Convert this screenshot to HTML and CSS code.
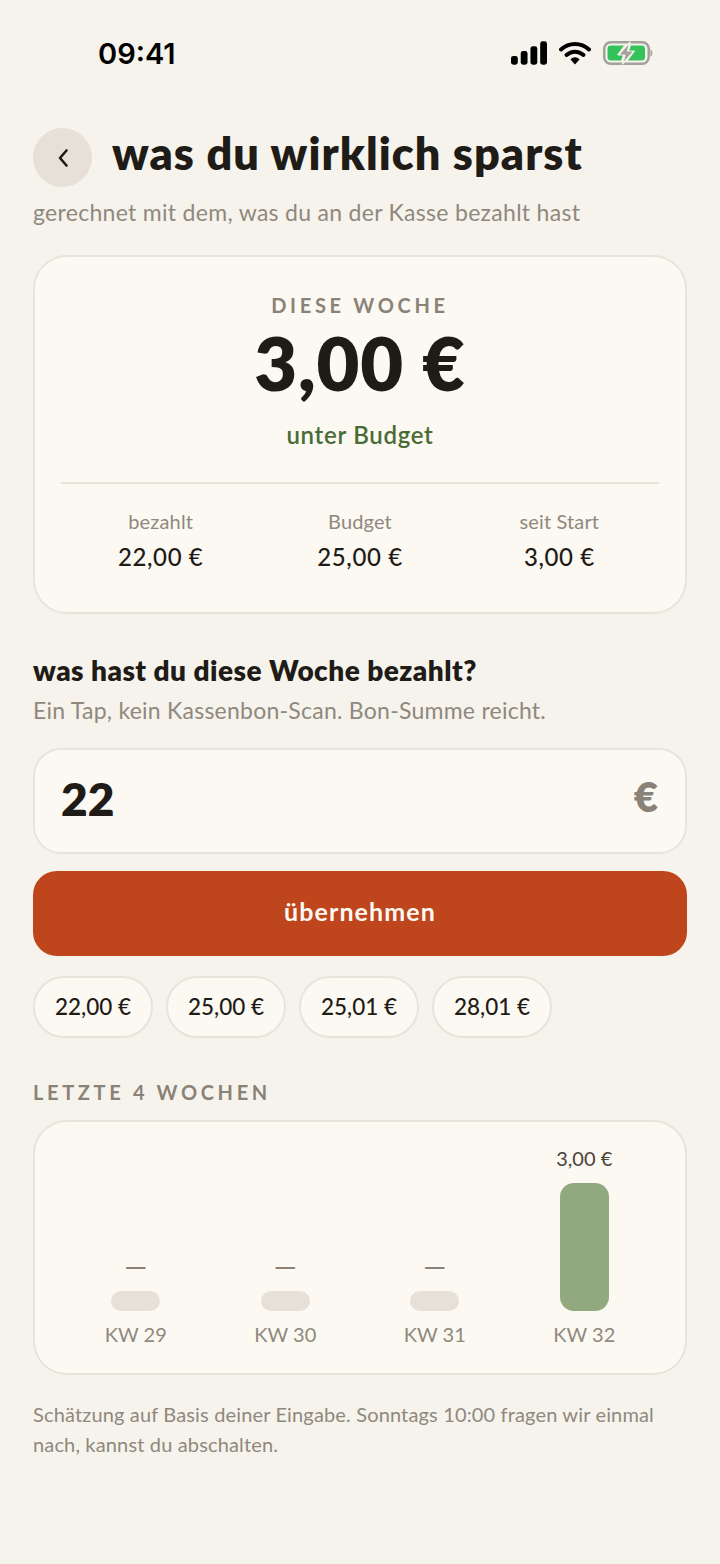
FILE: index.html
```html
<!DOCTYPE html>
<html lang="de">
<head>
<meta charset="utf-8">
<title>was du wirklich sparst</title>
<link rel="stylesheet" href="styles.css">
</head>
<body>
<div class="status">
  <span class="time">09:41</span>
  <div class="status-icons">
    <svg class="sig" width="36" height="24" viewBox="0 0 37 24"><rect x="0" y="15" width="7" height="9" rx="2.500"/><rect x="10" y="10" width="7" height="14" rx="2.500"/><rect x="20" y="5" width="7" height="19" rx="2.500"/><rect x="30" y="0" width="7" height="24" rx="2.500"/></svg>
    <svg class="wifi" width="32" height="24" viewBox="0 0 32 24"><path d="M2 8.500C10 1 22 1 30 8.500" fill="none" stroke="#000" stroke-width="4" stroke-linecap="round"/><path d="M7.500 14C12.500 9.500 19.500 9.500 24.500 14" fill="none" stroke="#000" stroke-width="4" stroke-linecap="round"/><path d="M11.500 18.500L16 23.500L20.500 18.500C18 15.500 14 15.500 11.500 18.500Z" fill="#000"/></svg>
    <svg class="batt" width="51" height="24" viewBox="0 0 51 24"><rect x="1.250" y="1.250" width="44.500" height="21.500" rx="6.500" fill="none" stroke="#a2a19a" stroke-width="2.500"/><path d="M8 4.500H21L14 14H20L18 19.500H8C5.500 19.500 4.500 18.500 4.500 16V8C4.500 5.500 5.500 4.500 8 4.500Z" fill="#34c35a"/><path d="M28 4.500H38.500C41 4.500 42 5.500 42 8V16C42 18.500 41 19.500 38.500 19.500H25L32 10H26Z" fill="#34c35a"/><path d="M27 1L15.500 14H22L19.500 23L31 10H24.500Z" fill="#a2a19a" stroke="#f6f3ec" stroke-width="1.200" stroke-linejoin="round"/><path d="M47.500 8.500C50 9.500 50 14.500 47.500 15.500Z" fill="#a2a19a"/></svg>
  </div>
</div>

<main class="page">
  <header class="head">
    <div class="back"><svg width="12" height="20" viewBox="0 0 12 20"><path d="M9.500 2.500L3 10L9.500 17.500" fill="none" stroke="#1f1b16" stroke-width="2.600" stroke-linecap="round" stroke-linejoin="round"/></svg></div>
    <h1>was du wirklich sparst</h1>
  </header>
  <p class="subtitle">gerechnet mit dem, was du an der Kasse bezahlt hast</p>

  <section class="card summary">
    <div class="eyebrow">DIESE WOCHE</div>
    <div class="big">3,00 €</div>
    <div class="under">unter Budget</div>
    <div class="stats">
      <div class="stat"><span class="stat-l">bezahlt</span><span class="stat-v">22,00 €</span></div>
      <div class="stat"><span class="stat-l">Budget</span><span class="stat-v">25,00 €</span></div>
      <div class="stat"><span class="stat-l">seit Start</span><span class="stat-v">3,00 €</span></div>
    </div>
  </section>

  <h2>was hast du diese Woche bezahlt?</h2>
  <p class="hint">Ein Tap, kein Kassenbon-Scan. Bon-Summe reicht.</p>

  <div class="input"><span class="input-v">22</span><span class="input-c">€</span></div>
  <div class="btn">übernehmen</div>

  <div class="chips">
    <span class="chip">22,00 €</span>
    <span class="chip">25,00 €</span>
    <span class="chip">25,01 €</span>
    <span class="chip">28,01 €</span>
  </div>

  <div class="section-label">LETZTE 4 WOCHEN</div>
  <section class="card chart">
    <div class="col"><span class="val dash">—</span><div class="bar empty"></div><span class="kw">KW 29</span></div>
    <div class="col"><span class="val dash">—</span><div class="bar empty"></div><span class="kw">KW 30</span></div>
    <div class="col"><span class="val dash">—</span><div class="bar empty"></div><span class="kw">KW 31</span></div>
    <div class="col"><span class="val dark">3,00 €</span><div class="bar full"></div><span class="kw">KW 32</span></div>
  </section>

  <p class="foot">Schätzung auf Basis deiner Eingabe. Sonntags 10:00 fragen wir einmal nach, kannst du abschalten.</p>
</main>
</body>
</html>
```

FILE: styles.css
```css
* { box-sizing: border-box; margin: 0; padding: 0; }
html, body { background: #f6f3ec; }
body {
  width: 720px;
  height: 1564px;
  overflow: hidden;
  font-family: "Lato", "Noto Sans", sans-serif;
  color: #1f1b16;
}
.status {
  height: 128px;
  padding: 36px 66px 0 98px;
  display: flex;
  justify-content: space-between;
  align-items: flex-start;
}
.time { font-family: "Inter", sans-serif; font-weight: 600; font-size: 29px; line-height: 36px; color: #000; }
.status-icons { display: flex; align-items: center; gap: 12px; padding-top: 5px; }
.status-icons svg { display: block; }
.page { padding: 0 33px; }
.head { display: flex; align-items: center; gap: 20px; height: 59px; }
.back {
  width: 59px; height: 59px; border-radius: 50%;
  background: #e6e0d6;
  display: flex; align-items: center; justify-content: center;
}
h1 { font-size: 45px; font-weight: 800; line-height: 59px; padding-bottom: 9px; letter-spacing: 1.05px; color: #1f1b16; white-space: nowrap; }
.subtitle { margin-top: 10px; font-size: 23px; line-height: 30px; color: #8f887d; letter-spacing: 0.3px; }
.card { background: #fcf9f3; border: 2px solid #e9e4da; border-radius: 34px; }
.summary { margin-top: 28px; height: 359px; padding: 36px 26px 0; text-align: center; }
.eyebrow { font-size: 20px; font-weight: 700; line-height: 24px; letter-spacing: 3.7px; color: #8a8277; }
.big { margin-top: 3px; font-size: 74px; font-weight: 800; line-height: 86px; letter-spacing: 0.8px; }
.under { margin-top: 14px; font-size: 24px; font-weight: 600; line-height: 30px; letter-spacing: 0.7px; color: #4a6b35; }
.stats { margin-top: 32px; border-top: 2px solid #e9e4da; padding-top: 24px; display: grid; grid-template-columns: repeat(3, 1fr); }
.stat { display: flex; flex-direction: column; align-items: center; gap: 8px; }
.stat-l { font-size: 20px; line-height: 26px; letter-spacing: 0.15px; color: #8f887d; }
.stat-v { font-size: 24px; line-height: 30px; font-weight: 500; letter-spacing: 0.6px; }
h2 { margin-top: 40px; font-size: 28px; font-weight: 800; line-height: 32px; letter-spacing: 0.47px; }
.hint { margin-top: 10px; font-size: 23px; line-height: 28px; color: #8f887d; letter-spacing: 0.25px; }
.input {
  margin-top: 24px; height: 106px;
  background: #fcf9f3; border: 2.5px solid #e8e4db; border-radius: 28px;
  display: flex; align-items: center; justify-content: space-between;
  padding: 0 27px 0 26px;
}
.input-v { font-size: 46px; font-weight: 800; line-height: 56px; padding-bottom: 4px; }
.input-c { font-size: 42px; font-weight: 800; line-height: 50px; color: #8a8277; padding-bottom: 10px; }
.btn {
  margin-top: 17px; height: 85px; border-radius: 24px;
  background: #bf451d; color: #fcf9f3;
  display: flex; align-items: center; justify-content: center;
  font-size: 25px; font-weight: 700; letter-spacing: 1.1px; padding-bottom: 6px;
}
.chips { margin-top: 20px; display: flex; gap: 13px; }
.chip {
  width: 120px; height: 62px; border-radius: 31px;
  background: #fcf9f3; border: 2px solid #e9e4da;
  display: flex; align-items: center; justify-content: center;
  font-size: 22.5px; font-weight: 500; padding-bottom: 2px;
}
.section-label { margin-top: 42px; font-size: 20px; font-weight: 700; line-height: 24px; letter-spacing: 3.65px; color: #8a8277; }
.chart { margin-top: 16px; height: 255px; padding: 0 26px 25px; display: grid; grid-template-columns: repeat(4, 1fr); }
.col { display: flex; flex-direction: column; align-items: center; justify-content: flex-end; }
.val { font-size: 20px; line-height: 26px; color: #8a8277; margin-bottom: 12px; }
.val.dash { font-size: 29px; }
.val.dark { color: #4a4339; }
.bar { width: 49px; }
.bar.empty { height: 20px; background: #e6e0d6; border-radius: 10px; }
.bar.full { height: 128px; background: #92a97f; border-radius: 14px; }
.kw { margin-top: 10px; padding-bottom: 1px; font-size: 20px; line-height: 26px; color: #8f887d; }
.foot { margin-top: 24px; font-size: 20px; line-height: 30px; color: #8f887d; letter-spacing: 0.15px; }
```
